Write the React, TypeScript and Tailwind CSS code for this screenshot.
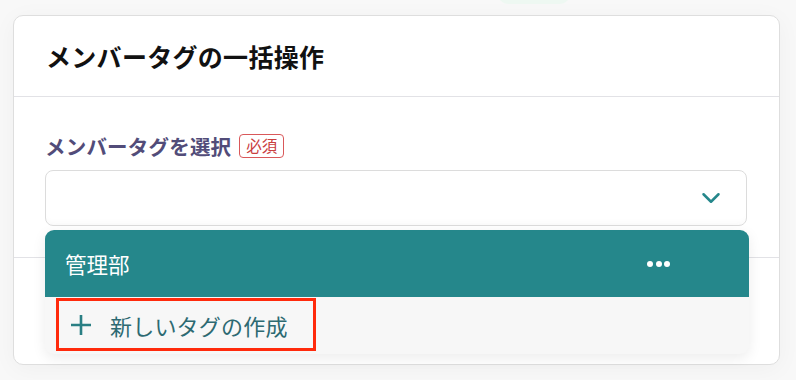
import { ChevronDown } from "lucide-react";

export default function App() {
  return (
    <div
      className="relative w-[796px] h-[380px] overflow-hidden bg-[#f8f8f8] pt-[15px] pl-[13px]"
      style={{ fontFamily: '"Noto Sans CJK JP", "Noto Sans", sans-serif' }}
    >
      {/* faint pill peeking from above */}
      <div className="absolute left-[497px] -top-[20px] w-[74px] h-[24px] rounded-full bg-[#eef8f2]" />

      {/* Card */}
      <div className="relative w-[767px] h-[350px] bg-white border border-[#dedede] rounded-[10px] shadow-[0_4px_24px_rgba(0,0,0,0.04)] flex flex-col">
        <div className="h-[81px] flex items-center px-[32px] border-b border-[#e2e2e6]">
          <h1 className="text-[25px] font-bold text-[#111] leading-none tracking-[0.3px]">メンバータグの一括操作</h1>
        </div>

        <div className="h-[161px] px-[31px] pt-[37px] border-b border-[#e2e2e6]">
          <div className="flex items-center gap-[8px]">
            <span className="text-[20.5px] font-bold text-[#524c79] leading-none tracking-[0.2px]">メンバータグを選択</span>
            <span className="h-[24px] px-[6px] flex items-center rounded-[4px] border border-[#d9585a] text-[15.5px] text-[#c9403f] leading-none">必須</span>
          </div>
          <div className="mt-[12px] h-[56px] w-[702px] rounded-[8px] border border-[#dcdcdc] bg-white flex items-center justify-end pr-[20px] shadow-[inset_0_-6px_8px_-6px_rgba(0,0,0,0.04)]">
            <ChevronDown size={30} strokeWidth={2} className="text-[#25878b]" />
          </div>
        </div>

        {/* Dropdown menu */}
        <div className="absolute left-[31px] top-[214px] w-[704px] rounded-[9px] overflow-hidden bg-[#f7f7f7] shadow-[0_4px_14px_rgba(0,0,0,0.08)]">
          <div className="h-[67px] bg-[#25878b] flex items-center justify-between pl-[20px] pr-[79px]">
            <span className="text-[21.5px] text-white leading-none">管理部</span>
            <div className="flex gap-[2.5px]">
              <span className="w-[6px] h-[6px] rounded-full bg-white" />
              <span className="w-[6px] h-[6px] rounded-full bg-white" />
              <span className="w-[6px] h-[6px] rounded-full bg-white" />
            </div>
          </div>
          <div className="h-[57px] pt-[1px] pl-[11px]">
            <div className="w-[260px] h-[53px] border-[3px] border-[#ff2a0c] flex items-center pl-[11px] gap-[18px]">
              <svg width="22" height="22" viewBox="0 0 22 22" fill="none" stroke="#2a7f84" strokeWidth="2.6">
                <line x1="11" y1="1" x2="11" y2="21" />
                <line x1="1" y1="11" x2="21" y2="11" />
              </svg>
              <span className="text-[22px] text-[#2d6a72] leading-none tracking-[0.2px]">新しいタグの作成</span>
            </div>
          </div>
        </div>
      </div>
    </div>
  );
}
